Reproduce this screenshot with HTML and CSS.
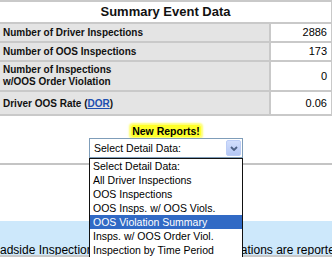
FILE: index.html
```html
<!DOCTYPE html>
<html>
<head>
<meta charset="utf-8">
<title>Summary Event Data</title>
<link rel="stylesheet" href="styles.css">
</head>
<body>
<div class="page">
  <div class="summary">
    <div class="title">Summary Event Data</div>
    <div class="row r1"><div class="label">Number of Driver Inspections</div><div class="value">2886</div></div>
    <div class="row r2"><div class="label">Number of OOS Inspections</div><div class="value">173</div></div>
    <div class="row r3"><div class="label">Number of Inspections<br>w/OOS Order Violation</div><div class="value">0</div></div>
    <div class="row r4"><div class="label">Driver OOS Rate (<a href="#" class="link">DOR</a>)</div><div class="value">0.06</div></div>
  </div>
  <div class="reports">
    <div class="new"><span class="hl">New Reports!</span></div>
    <div class="picker">
      <div class="select">
        <span class="current">Select Detail Data:</span>
        <span class="btn"><svg width="8" height="5" viewBox="0 0 8 5"><path d="M1 1 L4 4 L7 1" fill="none" stroke="#4d6185" stroke-width="1.8"/></svg></span>
      </div>
      <ul class="list">
        <li>Select Detail Data:</li>
        <li>All Driver Inspections</li>
        <li>OOS Inspections</li>
        <li>OOS Insps. w/ OOS Viols.</li>
        <li class="sel">OOS Violation Summary</li>
        <li>Insps. w/ OOS Order Viol.</li>
        <li>Inspection by Time Period</li>
      </ul>
    </div>
  </div>
  <hr class="rule">
  <div class="band"><p>adside Inspections in which a driver OOS violations are reported</p></div>
</div>
</body>
</html>
```
FILE: styles.css
```css
html, body {
  margin: 0;
  padding: 0;
}
body {
  width: 332px;
  height: 257px;
  overflow: hidden;
  background: #fff;
  color: #000;
  font-family: "Liberation Sans", Arial, sans-serif;
}
.summary {
  display: flex;
  flex-direction: column;
  gap: 2px;
  padding: 2px 1px 2px 0;
  background: #c9c9c9;
}
.title {
  background: #fff;
  height: 20px;
  line-height: 20px;
  text-align: center;
  font-weight: bold;
  font-size: 13px;
  color: #111;
}
.row {
  display: grid;
  grid-template-columns: 1fr 60px;
  gap: 2px;
}
.label {
  background: #e4e4e4;
  font-weight: bold;
  font-size: 10px;
  line-height: 13px;
  padding: 2px 3px;
  color: #111;
}
.value {
  background: #fff;
  font-size: 11px;
  line-height: 13px;
  padding: 0 4px;
  display: flex;
  align-items: center;
  justify-content: flex-end;
}
.r3 .label {
  line-height: 12px;
}
.r4 .label {
  padding: 5px 3px 4px;
}
.link {
  color: #1d4fb0;
  text-decoration: underline;
}
.new {
  text-align: center;
  padding-top: 7px;
  height: 14px;
  line-height: 14px;
  margin-bottom: 1px;
}
.hl {
  font-weight: bold;
  font-size: 10.5px;
  background: #ffff2a;
  box-shadow: 0 0 2px 2px #ffff70;
  border-radius: 2px;
  padding: 0 1px;
}
.picker {
  position: relative;
  width: 154px;
  margin: 0 auto;
}
.select {
  height: 20px;
  box-sizing: border-box;
  border: 1px solid #7f9db9;
  background: #fff;
  display: flex;
  align-items: center;
  padding-left: 4px;
  font-size: 10.5px;
}
.btn {
  margin-left: auto;
  margin-right: 1px;
  width: 15px;
  height: 16px;
  box-sizing: border-box;
  border: 1px solid #bccdf6;
  border-radius: 2px;
  background: linear-gradient(#d2defc, #b4c7f5);
  display: flex;
  align-items: center;
  justify-content: center;
}
.list {
  position: absolute;
  top: 100%;
  left: 0;
  width: 100%;
  box-sizing: border-box;
  margin: 0;
  padding: 0;
  list-style: none;
  border: 1px solid #111;
  background: #fff;
  font-size: 10.5px;
  z-index: 2;
}
.list li {
  height: 14px;
  line-height: 14px;
  padding-left: 3px;
  white-space: nowrap;
}
.list li.sel {
  background: #316ac5;
  color: #fff;
}
.rule {
  border: 0;
  height: 2px;
  margin: 5px 0 0;
  background: #c4c4c4;
}
.band {
  margin-top: 56px;
  height: 34px;
  background: #cde8fb;
  border-bottom: 2px solid #c8c8c8;
  overflow: hidden;
}
.band p {
  margin: 0;
  padding-top: 22px;
  line-height: 14px;
  font-size: 12px;
  white-space: nowrap;
}
```
